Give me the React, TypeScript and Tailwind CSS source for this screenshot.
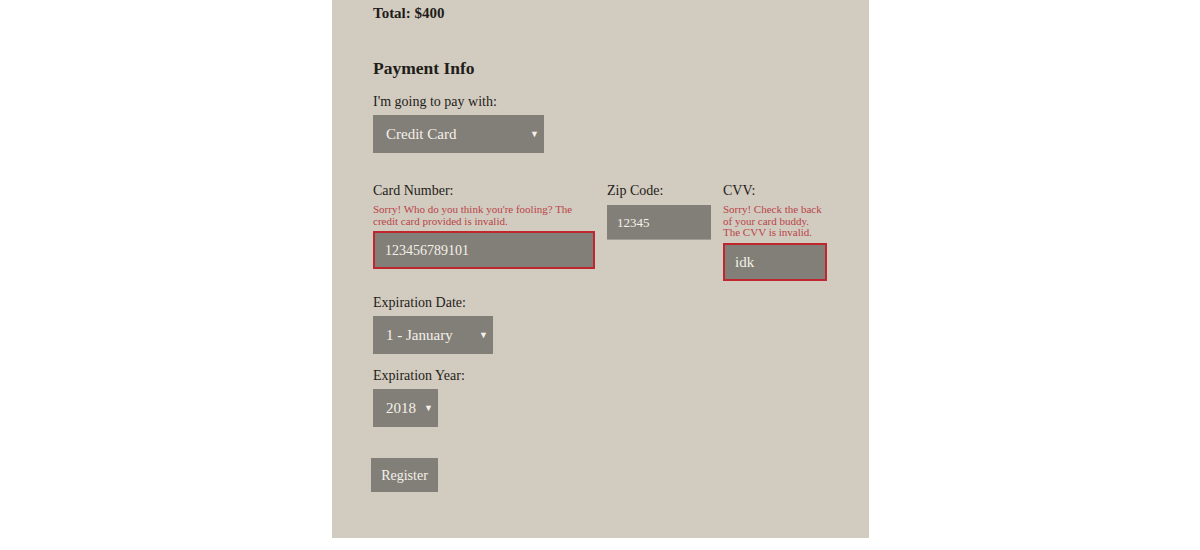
import React from "react";

const serif = "font-['Liberation_Serif','Times_New_Roman',serif]";

function Select({ value, width }: { value: string; width: string }) {
  return (
    <div className={`mt-[3px] flex h-[38px] items-center justify-between bg-[#827f78] pl-[13px] pr-[5px] pt-[1px] text-[15px] text-[#f4f1ea] ${width}`}>
      <span>{value}</span>
      <span className="text-[9px] leading-none">▼</span>
    </div>
  );
}

function ErrorText({ children }: { children: React.ReactNode }) {
  return <p className="mt-[3px] text-[11px] leading-[11.5px] text-[#b9444a]">{children}</p>;
}

export default function App() {
  return (
    <div className={`min-h-[550px] bg-white ${serif}`}>
      <div className="ml-[332px] flex h-[538px] w-[537px] flex-col bg-[#d2cbbf] px-[41px] pt-[3px] text-[#1f1d1a]">
        <p className="text-[15px] font-bold leading-5">Total: $400</p>

        <h2 className="mt-[33px] text-[17.5px] font-bold leading-6">Payment Info</h2>

        <label className="mt-[12px] text-[14px] leading-5">I'm going to pay with:</label>
        <Select value="Credit Card" width="w-[171px]" />

        <div className="mt-[28px] grid grid-cols-[222px_104px_104px] items-start gap-x-[12px]">
          <div className="flex flex-col">
            <label className="text-[14px] leading-5">Card Number:</label>
            <ErrorText>
              Sorry! Who do you think you're fooling? The
              <br />
              credit card provided is invalid.
            </ErrorText>
            <div className="mt-[4px] flex h-[38px] items-center border-2 border-[#c0262d] bg-[#827f78] px-[10px] pt-[1px] text-[14px] text-[#f4f1ea]">
              123456789101
            </div>
          </div>

          <div className="flex flex-col">
            <label className="text-[14px] leading-5">Zip Code:</label>
            <div className="mt-[4px] flex h-[35px] items-center border-b border-[#a19d95] bg-[#827f78] px-[10px] pt-[1px] text-[13px] text-[#f4f1ea]">
              12345
            </div>
          </div>

          <div className="flex flex-col">
            <label className="text-[14px] leading-5">CVV:</label>
            <ErrorText>
              Sorry! Check the back
              <br />
              of your card buddy.
              <br />
              The CVV is invalid.
            </ErrorText>
            <div className="mt-[4px] flex h-[38px] items-center border-2 border-[#c0262d] bg-[#827f78] px-[10px] pt-[1px] text-[15px] text-[#f4f1ea]">
              idk
            </div>
          </div>
        </div>

        <label className="mt-[12px] text-[14px] leading-5">Expiration Date:</label>
        <Select value="1 - January" width="w-[120px]" />

        <label className="mt-[12px] text-[14px] leading-5">Expiration Year:</label>
        <Select value="2018" width="w-[65px]" />

        <div>
          <button className="ml-[-2px] mt-[31px] h-[34px] w-[67px] bg-[#827f78] pt-[1px] text-[14px] text-[#f4f1ea]">
            Register
          </button>
        </div>
      </div>
    </div>
  );
}
